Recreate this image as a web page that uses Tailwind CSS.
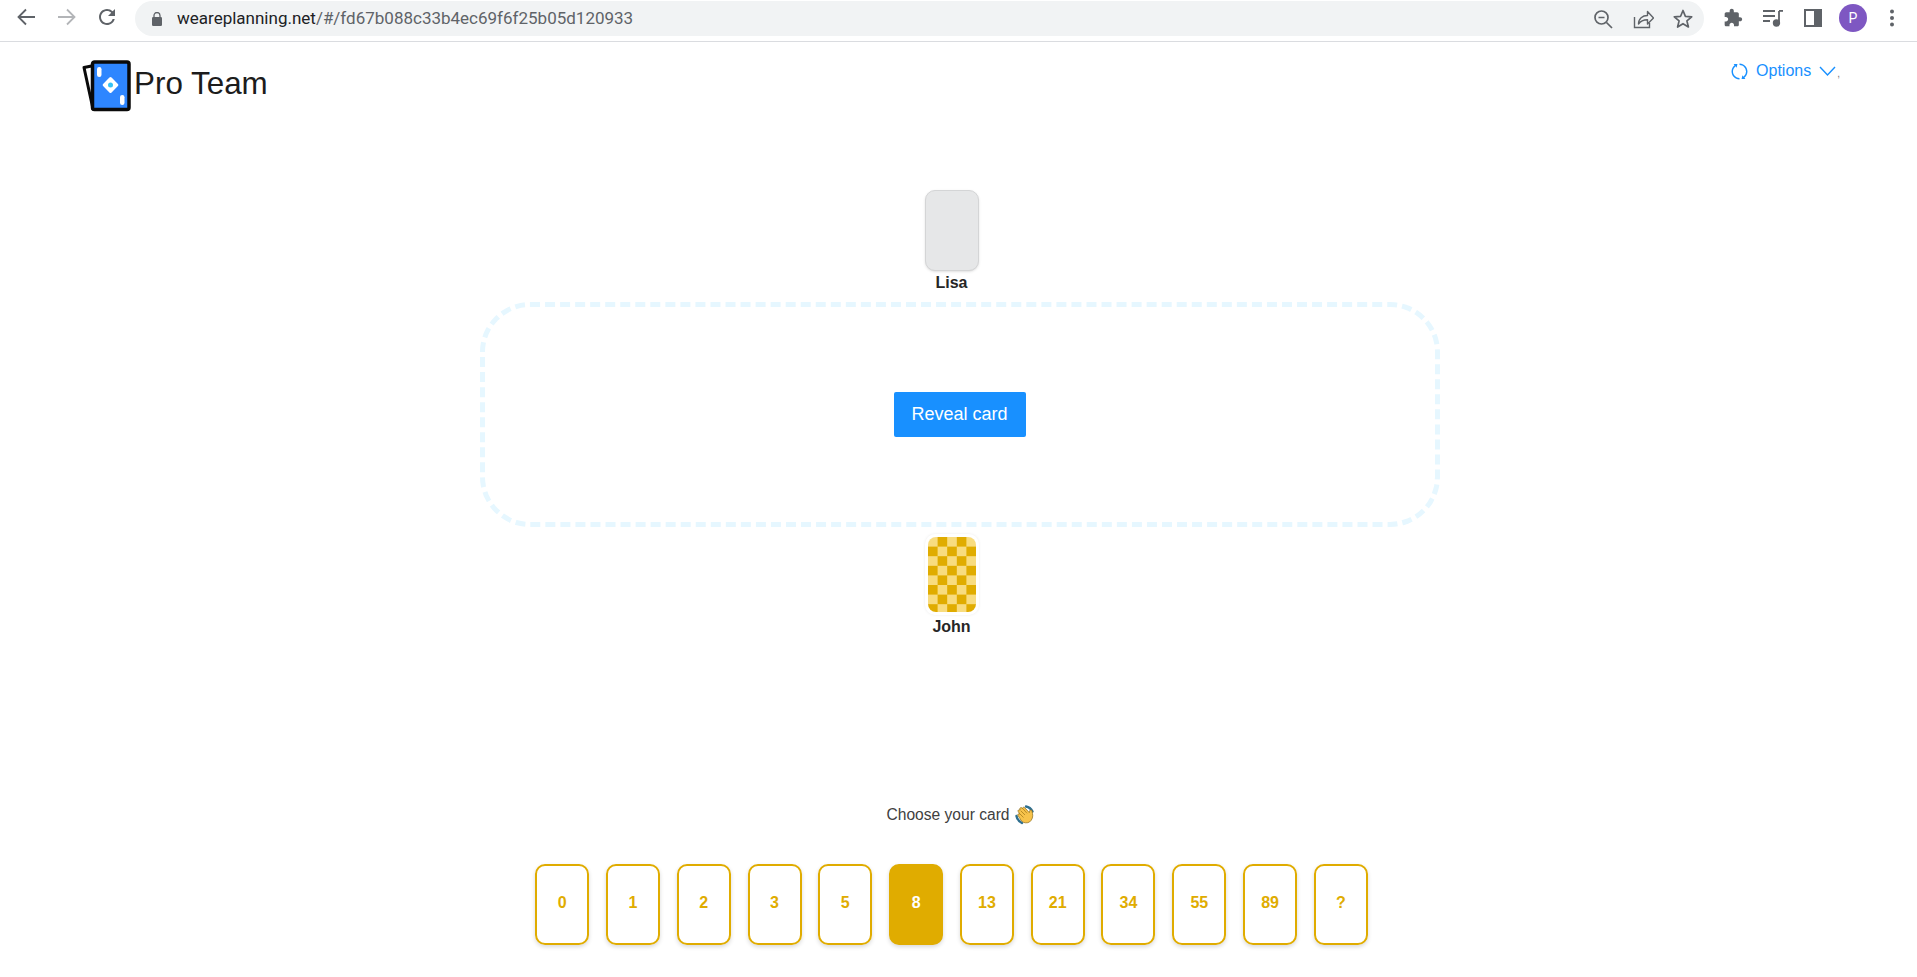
<!DOCTYPE html>
<html>
<head>
<meta charset="utf-8">
<script src="https://cdn.jsdelivr.net/npm/@tailwindcss/browser@4"></script>
</head>
<body class="w-[1917px] h-[977px] overflow-hidden bg-white font-['Liberation_Sans',Arial,sans-serif]">
<!-- browser bar -->
<div class="h-[42px] border-b border-[#dadce0] flex items-center relative bg-white">
  <div class="w-[135px] shrink-0 flex items-center pl-[14px] -mt-[7px]">
    <svg class="w-[24px] h-[24px]" viewBox="0 0 24 24" fill="none" stroke="#5f6368" stroke-width="1.8"><path d="M21 12H5M12 4.500 4.500 12l7.500 7.500"/></svg>
    <svg class="w-[24px] h-[24px] ml-[17px]" viewBox="0 0 24 24" fill="none" stroke="#b3b5b8" stroke-width="1.8"><path d="M3 12h16M12 4.500 19.500 12 12 19.500"/></svg>
    <svg class="w-[24px] h-[24px] ml-[16px]" viewBox="0 0 24 24" fill="#5f6368"><path d="M17.650 6.350A7.958 7.958 0 0 0 12 4c-4.420 0-7.990 3.580-7.990 8s3.570 8 7.990 8c3.730 0 6.840-2.550 7.730-6h-2.080A5.990 5.990 0 0 1 12 18c-3.310 0-6-2.690-6-6s2.690-6 6-6c1.660 0 3.140.690 4.220 1.780L13 11h7V4l-2.350 2.350z"/></svg>
  </div>
  <div class="w-[1569px] h-[35px] -mt-[4px] rounded-full bg-[#f1f3f4] flex items-center shrink-0">
    <svg class="w-[12px] h-[14px] ml-[16px]" viewBox="0 0 12 14" fill="#5f6368"><rect x="1" y="5" width="10" height="9" rx="1.300"/><path d="M3 5.500V3.500a3 3 0 0 1 6 0v2" fill="none" stroke="#5f6368" stroke-width="1.300"/></svg>
    <span class="ml-[14px] text-[17px] text-[#5f6368] font-['Roboto',sans-serif]"><span class="text-[#202124]">weareplanning.net</span>/#/fd67b088c33b4ec69f6f25b05d120933</span>
    <div class="ml-auto flex items-center gap-[18px] mr-[10px]">
      <svg class="w-[22px] h-[22px]" viewBox="0 0 22 22" fill="none" stroke="#5f6368" stroke-width="1.700"><circle cx="9.500" cy="9.500" r="6.500"/><path d="M14.500 14.500l5.500 5.500M6.500 9.500h6"/></svg>
      <svg class="w-[22px] h-[22px]" viewBox="0 0 22 22" fill="none" stroke="#5f6368" stroke-width="1.400"><path d="M2.500 9v10.500h15V15"/><path d="M6.500 16c0-5.500 4-8.500 9-8.500V3.500l6 6.500-6 6v-4.200c-4 0-7 1.200-9 4.200z" stroke-linejoin="round"/></svg>
      <svg class="w-[22px] h-[22px]" viewBox="0 0 22 22" fill="none" stroke="#5f6368" stroke-width="1.700" stroke-linejoin="round"><path d="M11 2.500l2.400 5.800 6.300.5-4.800 4.100 1.500 6.100L11 15.700l-5.400 3.300 1.500-6.100-4.800-4.100 6.300-.5z"/></svg>
    </div>
  </div>
  <div class="flex-1 flex items-center -mt-[5px]">
    <svg class="w-[20px] h-[20px] ml-[19px]" viewBox="0 0 24 24" fill="#5f6368"><path d="M20.500 11H19V7c0-1.100-.9-2-2-2h-4V3.500C13 2.120 11.880 1 10.500 1S8 2.120 8 3.500V5H4c-1.100 0-1.990.9-1.990 2v3.800H3.500c1.490 0 2.700 1.210 2.700 2.700s-1.210 2.700-2.700 2.700H2V20c0 1.100.9 2 2 2h3.800v-1.500c0-1.490 1.210-2.700 2.700-2.700 1.490 0 2.700 1.210 2.700 2.700V22H17c1.100 0 2-.9 2-2v-4h1.500c1.380 0 2.500-1.120 2.500-2.500S21.880 11 20.500 11z"/></svg>
    <svg class="w-[20px] h-[18px] ml-[20px]" viewBox="0 0 20 18" fill="none" stroke="#5f6368" stroke-width="1.800"><path d="M0 2h12M0 7h12M0 12h7"/><path d="M16 2v12"/><path d="M16 1.900h4"/><circle cx="13.500" cy="14" r="2.800" fill="#5f6368"/></svg>
    <svg class="w-[18px] h-[18px] ml-[21px]" viewBox="0 0 18 18"><rect x="1" y="1" width="16" height="16" fill="none" stroke="#5f6368" stroke-width="2"/><rect x="10" y="1" width="7" height="16" fill="#5f6368"/></svg>
    <div class="w-[28px] h-[28px] rounded-full bg-[#7e57c2] text-white text-[14px] flex items-center justify-center ml-[17px] font-['Roboto',sans-serif]">P</div>
    <svg class="w-[6px] h-[18px] ml-[22px]" viewBox="0 0 6 18" fill="#5f6368"><circle cx="3" cy="2.500" r="2"/><circle cx="3" cy="9" r="2"/><circle cx="3" cy="15.500" r="2"/></svg>
  </div>
</div>

<!-- app header -->
<div class="h-[70px] relative flex justify-between pl-[82px] pr-[77px]">
  <div class="flex items-start pt-[18px] gap-[3px]">
    <svg class="w-[49px] h-[52px]" viewBox="0 0 49 52">
      <path d="M2 7.500 12 5.500 20 47 11 49z" fill="#fff" stroke="#0a0a0a" stroke-width="3" stroke-linejoin="round"/>
      <rect x="10.500" y="2" width="36.500" height="47.500" rx="2" fill="#2e86ff" stroke="#0a0a0a" stroke-width="3.500"/>
      <rect x="15" y="7" width="4.500" height="10" rx="2.200" fill="#fff"/>
      <rect x="38" y="35" width="4.500" height="10" rx="2.200" fill="#fff"/>
      <rect x="22.500" y="19" width="12" height="12" rx="1.500" fill="#fff" transform="rotate(45 28.500 25)"/>
      <circle cx="28.500" cy="25" r="2.500" fill="#35c2f5"/>
    </svg>
    <span class="text-[31.400px] leading-[38px] text-[#1c1c1c] mt-[5px]">Pro Team</span>
  </div>
  <div class="flex items-center h-[20px] mt-[19px] text-[#1890ff] text-[16px] leading-[20px]">
    <svg class="w-[17px] h-[17px] -rotate-90" viewBox="64 64 896 896" fill="#1890ff"><path d="M168 504.200c1-43.700 10-86.100 26.900-126 17.300-41 42.100-77.700 73.700-109.400S337 212.300 378 195c42.400-17.900 87.400-27 133.900-27s91.500 9.100 133.800 27A341.500 341.500 0 0 1 755 268.800c9.900 9.900 19.200 20.400 27.800 31.400l-60.200 47a8 8 0 0 0 3 14.100l175.700 43c5 1.200 9.900-2.600 9.900-7.700l.8-180.900c0-6.700-7.700-10.500-12.900-6.300l-56.400 44.100C765.800 155.100 646.200 92 511.800 92 282.700 92 96.300 275.600 92 503.800a8 8 0 0 0 8 8.200h60c4.400 0 7.900-3.500 8-7.800zm756 7.800h-60c-4.400 0-7.900 3.500-8 7.800-1 43.700-10 86.100-26.900 126-17.300 41-42.100 77.800-73.700 109.400A342.450 342.450 0 0 1 512.100 856a342.240 342.240 0 0 1-243.200-100.800c-9.900-9.900-19.200-20.400-27.800-31.400l60.200-47a8 8 0 0 0-3-14.100l-175.700-43c-5-1.200-9.900 2.600-9.900 7.700l-.7 181c0 6.700 7.700 10.500 12.900 6.300l56.400-44.100C258.200 868.900 377.800 932 512.200 932 741.400 932 927.700 748.300 932 520.200a8 8 0 0 0-8-8.200z"/></svg>
    <span class="ml-[8px]">Options</span>
    <svg class="w-[17px] h-[12px] ml-[8px]" viewBox="0 0 17 12" fill="none" stroke="#1890ff" stroke-width="1.400"><path d="M1 2l7.500 8L16 2"/></svg>
    <span class="text-[10px] text-[#777] ml-[1px] mt-[6px]">,</span>
  </div>
</div>

<!-- table area -->
<main class="flex flex-col items-center pt-[78px] w-[1919px]">
  <div class="flex flex-col items-center -ml-[16px]">
    <div class="w-[54px] h-[81px] rounded-[10px] bg-[#e6e7e8] border border-[#d4d5d6] shadow-sm"></div>
    <div class="text-[16px] leading-[20px] font-bold text-[#262626] mt-[2px] -mb-[1px]">Lisa</div>
  </div>
  <div class="w-[960px] h-[225px] mt-[10px] border-[5px] border-dashed border-[#e6f7ff] rounded-[50px] flex items-center justify-center">
    <button class="w-[132px] h-[45px] rounded-[2px] bg-[#1890ff] text-white text-[18px]">Reveal card</button>
  </div>
  <div class="flex flex-col items-center -ml-[16px] mt-[7px]">
    <div class="w-[54px] h-[81px] rounded-[10px] bg-white p-[3px] shadow-[0_0_3px_rgba(0,0,0,0.08)]">
      <svg class="w-[48px] h-[75px] rounded-[8px]" viewBox="0 0 48 75">
        <defs><pattern id="chk" width="19.200" height="19.200" patternUnits="userSpaceOnUse"><rect width="19.200" height="19.200" fill="#f8dc7f"/><rect x="9.600" width="9.600" height="9.600" fill="#e0ac00"/><rect y="9.600" width="9.600" height="9.600" fill="#e0ac00"/></pattern></defs>
        <rect width="48" height="75" fill="url(#chk)"/>
      </svg>
    </div>
    <div class="text-[16px] leading-[20px] font-bold text-[#262626] mt-[2px]">John</div>
  </div>

  <div class="flex items-center mt-[168px] ml-[2px] text-[15.600px] leading-[20px] text-[#404040]">
    <span>Choose your card</span>
    <svg class="w-[20px] h-[20px] ml-[5px]" viewBox="0 0 20 20">
      <path d="M11 1.500c3 .5 5 2 6.500 5" fill="none" stroke="#2f6f8f" stroke-width="2.400" stroke-linecap="round"/>
      <path d="M1.500 11c.5 3 2.500 5.500 5.500 7" fill="none" stroke="#2f6f8f" stroke-width="2.400" stroke-linecap="round"/>
      <path d="M17.500 8.500c.8 3-.3 6.500-3 8.500-2.700 1.500-6 1-8-1L3 10.500c-.8-1.200 .8-2.300 1.800-1.400L3.200 6.500c-.7-1.300 1-2.400 2-1.300L4.900 4.200c-.5-1.300 1.200-2.200 2.100-1.200l.5.600c-.2-1.300 1.500-1.900 2.300-.8l4.500 4.800.5-2c.5-1.200 2.200-.8 2.200.5z" fill="#f7c34b" stroke="#8a6a1a" stroke-width=".7"/>
      <path d="M5 9l3.500 3.500M6 6l4 4M8 3.800l4 4.500" stroke="#a87f1c" stroke-width=".8" fill="none"/>
    </svg>
  </div>

  <div class="flex gap-[16.800px] mt-[39px] -ml-[16px] text-[16px] font-bold">
    <div class="w-[54px] h-[81px] pb-[3px] rounded-[10px] border-2 border-[#e0ac00] shadow-[0_2px_4px_rgba(0,0,0,0.15)] flex items-center justify-center text-[#e0ac00]">0</div>
    <div class="w-[54px] h-[81px] pb-[3px] rounded-[10px] border-2 border-[#e0ac00] shadow-[0_2px_4px_rgba(0,0,0,0.15)] flex items-center justify-center text-[#e0ac00]">1</div>
    <div class="w-[54px] h-[81px] pb-[3px] rounded-[10px] border-2 border-[#e0ac00] shadow-[0_2px_4px_rgba(0,0,0,0.15)] flex items-center justify-center text-[#e0ac00]">2</div>
    <div class="w-[54px] h-[81px] pb-[3px] rounded-[10px] border-2 border-[#e0ac00] shadow-[0_2px_4px_rgba(0,0,0,0.15)] flex items-center justify-center text-[#e0ac00]">3</div>
    <div class="w-[54px] h-[81px] pb-[3px] rounded-[10px] border-2 border-[#e0ac00] shadow-[0_2px_4px_rgba(0,0,0,0.15)] flex items-center justify-center text-[#e0ac00]">5</div>
    <div class="w-[54px] h-[81px] pb-[3px] rounded-[10px] border-2 border-[#e0ac00] bg-[#e0ac00] shadow-[0_2px_4px_rgba(0,0,0,0.15)] flex items-center justify-center text-white">8</div>
    <div class="w-[54px] h-[81px] pb-[3px] rounded-[10px] border-2 border-[#e0ac00] shadow-[0_2px_4px_rgba(0,0,0,0.15)] flex items-center justify-center text-[#e0ac00]">13</div>
    <div class="w-[54px] h-[81px] pb-[3px] rounded-[10px] border-2 border-[#e0ac00] shadow-[0_2px_4px_rgba(0,0,0,0.15)] flex items-center justify-center text-[#e0ac00]">21</div>
    <div class="w-[54px] h-[81px] pb-[3px] rounded-[10px] border-2 border-[#e0ac00] shadow-[0_2px_4px_rgba(0,0,0,0.15)] flex items-center justify-center text-[#e0ac00]">34</div>
    <div class="w-[54px] h-[81px] pb-[3px] rounded-[10px] border-2 border-[#e0ac00] shadow-[0_2px_4px_rgba(0,0,0,0.15)] flex items-center justify-center text-[#e0ac00]">55</div>
    <div class="w-[54px] h-[81px] pb-[3px] rounded-[10px] border-2 border-[#e0ac00] shadow-[0_2px_4px_rgba(0,0,0,0.15)] flex items-center justify-center text-[#e0ac00]">89</div>
    <div class="w-[54px] h-[81px] pb-[3px] rounded-[10px] border-2 border-[#e0ac00] shadow-[0_2px_4px_rgba(0,0,0,0.15)] flex items-center justify-center text-[#e0ac00]">?</div>
  </div>
</main>
</body>
</html>
